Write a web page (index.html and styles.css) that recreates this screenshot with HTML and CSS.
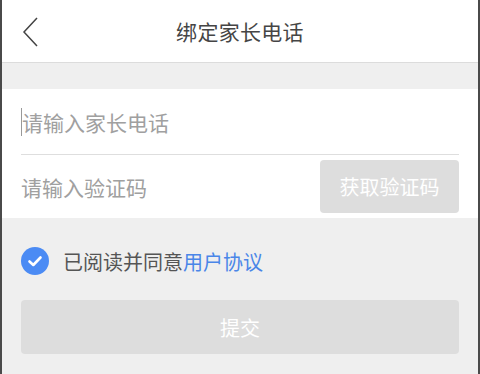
FILE: index.html
```html
<!DOCTYPE html>
<html lang="zh">
<head>
<meta charset="utf-8">
<link rel="stylesheet" href="styles.css">
</head>
<body>
<div class="page">
  <header class="nav">
    <svg class="back" width="18" height="32" viewBox="0 0 18 32"><path d="M15 2 L2 16 L15 30" fill="none" stroke="#444" stroke-width="1.5"/></svg>
    <div class="title">绑定家长电话</div>
  </header>
  <div class="gap"></div>
  <section class="form">
    <div class="row phone"><span class="caret"></span><span class="ph">请输入家长电话</span></div>
    <div class="row code">
      <span class="ph">请输入验证码</span>
      <div class="getcode">获取验证码</div>
    </div>
  </section>
  <div class="agree">
    <svg class="check" width="28" height="28" viewBox="0 0 28 28"><circle cx="14" cy="14" r="14" fill="#4b8bf4"/><path d="M8.5 14.5 L12.3 18 L19.5 10.5" fill="none" stroke="#fff" stroke-width="2.6" stroke-linecap="round" stroke-linejoin="round"/></svg>
    <span class="agree-text">已阅读并同意<span class="link">用户协议</span></span>
  </div>
  <div class="submit">提交</div>
</div>
</body>
</html>
```
FILE: styles.css
```css
html, body {
  margin: 0;
  padding: 0;
}
body {
  font-family: "Noto Sans CJK SC", "Noto Sans", sans-serif;
}
.page {
  width: 480px;
  height: 374px;
  box-sizing: border-box;
  border-left: 2px solid #4a4a4a;
  border-right: 2px solid #4a4a4a;
  background: #efefef;
  overflow: hidden;
}
.nav {
  height: 62px;
  background: #fff;
  border-bottom: 1px solid #dcdcdc;
  display: flex;
  align-items: center;
  justify-content: center;
  position: relative;
}
.back {
  position: absolute;
  left: 20px;
  top: 16px;
}
.title {
  font-size: 21px;
  color: #454545;
  letter-spacing: 0.3px;
}
.gap {
  height: 26px;
}
.form {
  background: #fff;
  padding: 0 19px;
}
.row {
  display: flex;
  align-items: center;
}
.phone {
  height: 65px;
  border-bottom: 1px solid #dedede;
}
.code {
  height: 63px;
  justify-content: space-between;
}
.ph {
  font-size: 21px;
  color: #a0a0a0;
}
.caret {
  width: 1px;
  height: 28px;
  background: #999;
}
.getcode {
  width: 139px;
  height: 53px;
  border-radius: 4px;
  background: #dddddd;
  color: #fff;
  font-size: 20px;
  display: flex;
  align-items: center;
  justify-content: center;
}
.agree {
  display: flex;
  align-items: center;
  height: 28px;
  padding: 29px 19px 0;
}
.check {
  margin-right: 14px;
}
.agree-text {
  font-size: 20px;
  color: #555;
}
.link {
  color: #4a86e8;
}
.submit {
  margin: 25px 19px 0;
  height: 54px;
  border-radius: 4px;
  background: #dddddd;
  color: #fff;
  font-size: 20px;
  display: flex;
  align-items: center;
  justify-content: center;
}
```
